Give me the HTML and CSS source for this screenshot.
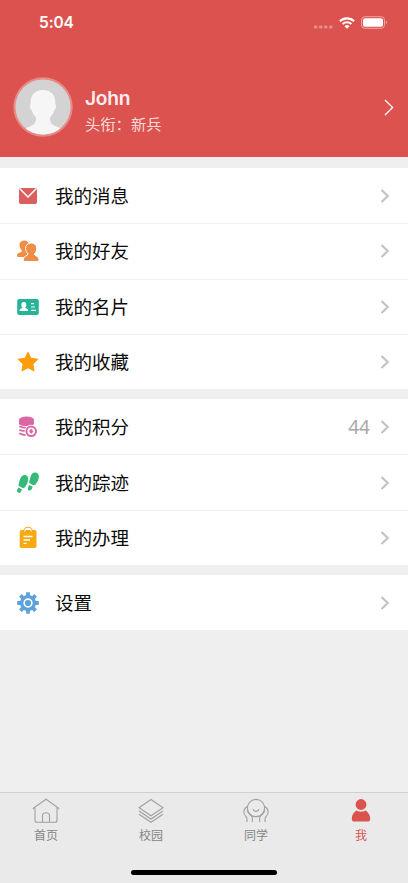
FILE: index.html
```html
<!DOCTYPE html>
<html lang="zh-CN">
<head>
<meta charset="utf-8">
<meta name="viewport" content="width=device-width, initial-scale=1">
<title>我</title>
<link rel="stylesheet" href="styles.css">
</head>
<body>
<svg class="defs" width="0" height="0">
  <symbol id="chevron" viewBox="0 0 10 14"><path d="M1.500 1l6.200 6-6.200 6" fill="none" stroke="currentColor" stroke-width="2.200"/></symbol>
</svg>
<div class="screen">
  <header class="header">
    <div class="status">
      <span class="time">5:04</span>
      <div class="signals">
        <svg width="19" height="4" viewBox="0 0 19 4" fill="#e88f8c"><rect x="0" y="0.5" width="3.4" height="3" rx="1"/><rect x="5" y="0.5" width="3.4" height="3" rx="1"/><rect x="10" y="0.5" width="3.4" height="3" rx="1"/><rect x="15" y="0.5" width="3.4" height="3" rx="1"/></svg>
        <svg class="wifi" width="16" height="12" viewBox="0 0 16 12"><path d="M.9 4.2a10.3 10.3 0 0 1 14.2 0M3.6 7a6.4 6.4 0 0 1 8.8 0" fill="none" stroke="#fff" stroke-width="2.1"/><path d="M5.5 9.2a3.6 3.6 0 0 1 5 0L8 11.8z" fill="#fff"/></svg>
        <svg class="battery" width="27" height="13" viewBox="0 0 27 13"><rect x=".5" y=".7" width="23" height="11.6" rx="3.4" fill="none" stroke="#eda5a3"/><rect x="2" y="2.2" width="20" height="8.6" rx="2" fill="#fff"/><path d="M24.8 4.6c1.6.6 1.6 3.2 0 3.8z" fill="#eda5a3"/></svg>
      </div>
    </div>
    <div class="profile">
      <svg class="avatar" width="60" height="60" viewBox="0 0 60 60">
        <clipPath id="face"><circle cx="30" cy="30" r="27.6"/></clipPath>
        <circle cx="30" cy="30" r="29.7" fill="#e88b88"/>
        <circle cx="30" cy="30" r="27.6" fill="#d3d3d3"/>
        <path clip-path="url(#face)" fill="#f6f6f6" d="M30 13c8 0 12.6 5.200 12.300 12.500 0 1 .1 2 .7 3.200.5 1.900-.5 3.600-1.700 4.300-.7 3.300-2.300 5.800-4.300 7.500-.3 6 2 7.600 10 10.500V60H13v-9c8-2.900 10.300-4.500 10-10.500-2-1.700-3.600-4.200-4.300-7.500-1.200-.7-2.200-2.400-1.700-4.300.6-1.200.7-2.200.7-3.200C17.400 18.200 22 13 30 13z"/>
      </svg>
      <div class="who">
        <div class="name">John</div>
        <div class="rank">头衔：新兵</div>
      </div>
      <svg class="open" width="10" height="17" viewBox="0 0 10 17"><path d="M1 1l7.600 7.500L1 16" fill="none" stroke="#fff" stroke-width="1.300"/></svg>
    </div>
  </header>

  <main class="menu">
    <section class="group">
      <div class="row">
        <svg class="icon" viewBox="0 0 24 24"><rect x="3" y="4" width="18" height="16" rx="1.800" fill="#dc5f60"/><path d="M3.800 4.800L12 13l8.200-8.200" fill="none" stroke="#fff" stroke-width="1.500"/></svg>
        <span class="label">我的消息</span><svg class="arrow"><use href="#chevron"/></svg>
      </div>
      <div class="row">
        <svg class="icon" viewBox="0 0 24 24" fill="#ee8d45"><path d="M8.300 1.500c2.900 0 4.600 2 4.600 4.600 0 2.500-1 4.300-2 5.200-.2 2.500.5 3 1 3.700l-2 3H2.200c-.9 0-1.200-.6-1.200-1.700 0-2.300 4-2.500 4.700-3.700.3-.8 0-1.200-.2-1.700C4.300 10 3.500 8 3.500 6.100c0-2.600 1.900-4.600 4.800-4.600z"/><path d="M15.200 4c3.500 0 5.500 2.300 5.500 5.400 0 2.300-1 4.300-2.300 5.300-.4 2.300 4.600 2.200 4.600 5.400 0 1.800-.4 2.400-1.700 2.400H9c-1.300 0-1.700-.6-1.700-2.400 0-3.200 5-3.100 4.600-5.400-1.300-1-2.300-3-2.300-5.300 0-3.100 2.100-5.400 5.600-5.400z" stroke="#fff" stroke-width="1"/></svg>
        <span class="label">我的好友</span><svg class="arrow"><use href="#chevron"/></svg>
      </div>
      <div class="row">
        <svg class="icon" viewBox="0 0 24 24"><rect x="1.200" y="4" width="21.600" height="16" rx="2" fill="#26b397"/><g fill="#fff"><ellipse cx="7.800" cy="10" rx="2.500" ry="2.900"/><path d="M6.500 11h2.600v2c2.300.6 3.100 1.200 3.100 3.100H3.400c0-1.900.8-2.500 3.100-3.100z"/><path d="M15 8.100h3v1.200h-3zM15 11.400h4v1.200h-4zM15 14.800h5V16h-5z"/></g></svg>
        <span class="label">我的名片</span><svg class="arrow"><use href="#chevron"/></svg>
      </div>
      <div class="row">
        <svg class="icon" viewBox="0 0 24 24"><path d="M12 2.200l3 6.100 6.900 1-5 4.800 1.200 6.900-6.100-3.300L5.900 21l1.200-6.900-5-4.800 6.900-1z" fill="#ff9c0b" stroke="#ff9c0b" stroke-width="1" stroke-linejoin="round"/></svg>
        <span class="label">我的收藏</span><svg class="arrow"><use href="#chevron"/></svg>
      </div>
    </section>
    <section class="group">
      <div class="row">
        <svg class="icon" viewBox="0 0 24 24"><g fill="#db66a4"><ellipse cx="10.500" cy="4.800" rx="7.500" ry="3.200"/><path d="M3 5h15v4.200c-2.500 2.200-12 2.800-15 0z"/></g><path d="M3.300 11.300c2 1.300 4.300 1.500 7 1.500M3.300 14.800c1.500 1 3.300 1.300 5.500 1.300M3.300 18.300c1.500 1.200 3.500 1.600 6.500 1.800" fill="none" stroke="#db66a4" stroke-width="1.800"/><circle cx="15.200" cy="16.300" r="6.500" fill="#fff"/><circle cx="15.200" cy="16.300" r="4.800" fill="#fff" stroke="#db66a4" stroke-width="2"/><path d="M15.200 13.600l2.200 2.700-2.200 2.700-2.200-2.700z" fill="#db66a4"/></svg>
        <span class="label">我的积分</span><span class="value">44</span><svg class="arrow"><use href="#chevron"/></svg>
      </div>
      <div class="row">
        <svg class="icon" viewBox="0 0 24 24" fill="#36ba79"><path d="M8.300 4c3.300 0 4.400 2.700 3.700 5.900-.4 2.200-1.500 4.200-2.700 5.900-.8 1.200-2 1.500-3.200 1L3.200 15.300c-.8-.5-.8-1.500-.5-2.500C3.900 8.500 5 4.100 8.300 4zM2.400 16.600l3.500 1.600c-.7 2.700-1.900 4.200-3.500 3.600-2.100-.8-1.300-3.500 0-5.200z"/><path d="M18.800 1.400c3.100 0 4.600 2.400 3.900 5.600-.4 2.300-1.500 4.200-2.700 5.800-.8 1.200-1.800 1.800-3.100 1.200l-3-1.400c-.8-.4-.9-1.300-.6-2.400 1.100-4.400 2.200-8.800 5.500-8.800zM13 14.100l3.700 1.700c-.8 2.800-2.200 4.300-3.800 3.600-1.800-.8-.9-3.500.1-5.300z"/></svg>
        <span class="label">我的踪迹</span><svg class="arrow"><use href="#chevron"/></svg>
      </div>
      <div class="row">
        <svg class="icon" viewBox="0 0 24 24"><path d="M7.700 5a4.300 3.800 0 0 1 8.600 0" fill="none" stroke="#f5a913" stroke-width="1.100"/><rect x="3.700" y="4" width="16.800" height="18" rx="1.700" fill="#f5a913"/><path d="M8.200 5.200c1.500 0 1.500-2.700 3.800-2.700s2.300 2.700 3.800 2.700" fill="none" stroke="#fff" stroke-width="1"/><path d="M7.500 10.500h9M7.500 14h6.500M7.500 17.300h3" stroke="#fff" stroke-width="1.300"/></svg>
        <span class="label">我的办理</span><svg class="arrow"><use href="#chevron"/></svg>
      </div>
    </section>
    <section class="group">
      <div class="row">
        <svg class="icon" viewBox="0 0 24 24"><g stroke="#5da2da" stroke-width="3.800"><path d="M12 1.200v21.600M1.200 12h21.600M4.400 4.400l15.200 15.200M19.600 4.400L4.400 19.600"/></g><circle cx="12" cy="12" r="8" fill="#5da2da"/><circle cx="12" cy="12" r="3.900" fill="none" stroke="#fff" stroke-width="1.600"/></svg>
        <span class="label">设置</span><svg class="arrow"><use href="#chevron"/></svg>
      </div>
    </section>
  </main>

  <footer class="bottom">
    <nav class="tabs">
      <div class="tab">
        <svg viewBox="0 0 28 26"><path d="M3 9.800v12.400c0 1.200.8 2 2 2h18c1.200 0 2-.8 2-2V9.800M1.300 11.200v-1L14 1.200l12.700 9v1M10.500 24v-6.300c0-4 7-4 7 0V24"/></svg>
        <span>首页</span>
      </div>
      <div class="tab">
        <svg viewBox="0 0 28 26"><path d="M14 1.500l12 8.300-12 8-12-8zM2 13l12 8 12-8M2 16.300l12 8 12-8"/></svg>
        <span>校园</span>
      </div>
      <div class="tab">
        <svg viewBox="0 0 28 26"><circle cx="14" cy="10" r="8.600"/><path d="M11 11.300c1 2.800 5 2.800 6 0M5.700 8C1.500 10.500.8 15 3.500 18c2 1.800 1.900 3.300 1.300 6.200M22.300 8c4.200 2.500 4.900 7 2.200 10-2 1.800-1.900 3.300-1.300 6.200M5.500 12c-.3 2.500 1.500 4 4 6 1.500 1.400 1.100 3.500.5 6M22.500 12c.3 2.500-1.500 4-4 6-1.500 1.400-1.100 3.500-.5 6"/></svg>
        <span>同学</span>
      </div>
      <div class="tab active">
        <svg viewBox="0 0 28 26"><circle cx="14" cy="6.500" r="5.400"/><path d="M9.500 12.500c2.500 1.600 6.500 1.600 9 0 3 1.500 4.700 4.800 4.700 8.200 0 1.900-1 2.900-2.700 2.900h-13c-1.700 0-2.700-1-2.700-2.900 0-3.400 1.700-6.700 4.700-8.200z"/></svg>
        <span>我</span>
      </div>
    </nav>
    <div class="home-bar"></div>
  </footer>
</div>
</body>
</html>
```
FILE: styles.css
```css
* { box-sizing: border-box; }
body {
  margin: 0;
  background: #efefef;
  font-family: Inter, "Noto Sans CJK SC", sans-serif;
  color: #0b0b0b;
}
svg { display: block; flex: none; }
.defs { position: absolute; }
.screen { height: 883px; display: flex; flex-direction: column; overflow: hidden; }

.header { height: 157px; background: #dc524f; color: #fff; }
.status {
  height: 45px;
  padding: 0 20.500px 0 39px;
  display: flex;
  align-items: center;
  justify-content: space-between;
}
.time { font-size: 15.500px; line-height: 20px; font-weight: 600; letter-spacing: -.1px; }
.signals { display: flex; align-items: center; }
.signals svg:first-child { margin-top: 8px; }
.wifi { margin-left: 6px; }
.battery { margin-left: 6px; }
.profile { display: flex; align-items: center; height: 60px; margin-top: 32px; padding: 0 14px 0 13px; }
.who { flex: 1; padding: 6px 0 0 12px; }
.name { font-size: 19.200px; line-height: 26px; font-weight: 600; letter-spacing: -.25px; color: #fdeeee; }
.rank { font-size: 15.300px; line-height: 22px; margin-top: 3px; color: #f9dad9; }

.menu { flex: 1; display: flex; flex-direction: column; gap: 10px; padding-top: 11px; }
.group { background: #fff; }
.row { height: 55.300px; display: flex; align-items: center; padding: 0 18px 0 15.500px; }
.row + .row { border-top: 1px solid #f1f1f1; }
.icon { width: 24px; height: 24px; }
.label { flex: 1; margin-left: 15.500px; font-size: 18.500px; line-height: 28px; }
.value { font-size: 19px; color: #a9a9a9; margin-right: 10px; font-family: "Noto Sans", sans-serif; }
.arrow { width: 10px; height: 14px; color: #c3c3c3; }

.bottom { height: 91px; background: #eaeaea; border-top: 1px solid #cfcfcf; }
.tabs { display: flex; height: 77px; }
.tab {
  flex: 0 0 105px;
  padding: 5px 13px 0 0;
  display: flex;
  flex-direction: column;
  align-items: center;
  font-size: 12px;
  line-height: 18px;
  color: #858585;
}
.tab svg { width: 28px; height: 26px; fill: none; stroke: #a0a0a0; stroke-width: 1.100; }
.tab span { margin-top: 3px; }
.tab.active { color: #dc524f; }
.tab.active svg { fill: #dc524f; stroke: none; }
.home-bar { width: 146px; height: 5px; margin: 0 auto; border-radius: 3px; background: #000; }
```
